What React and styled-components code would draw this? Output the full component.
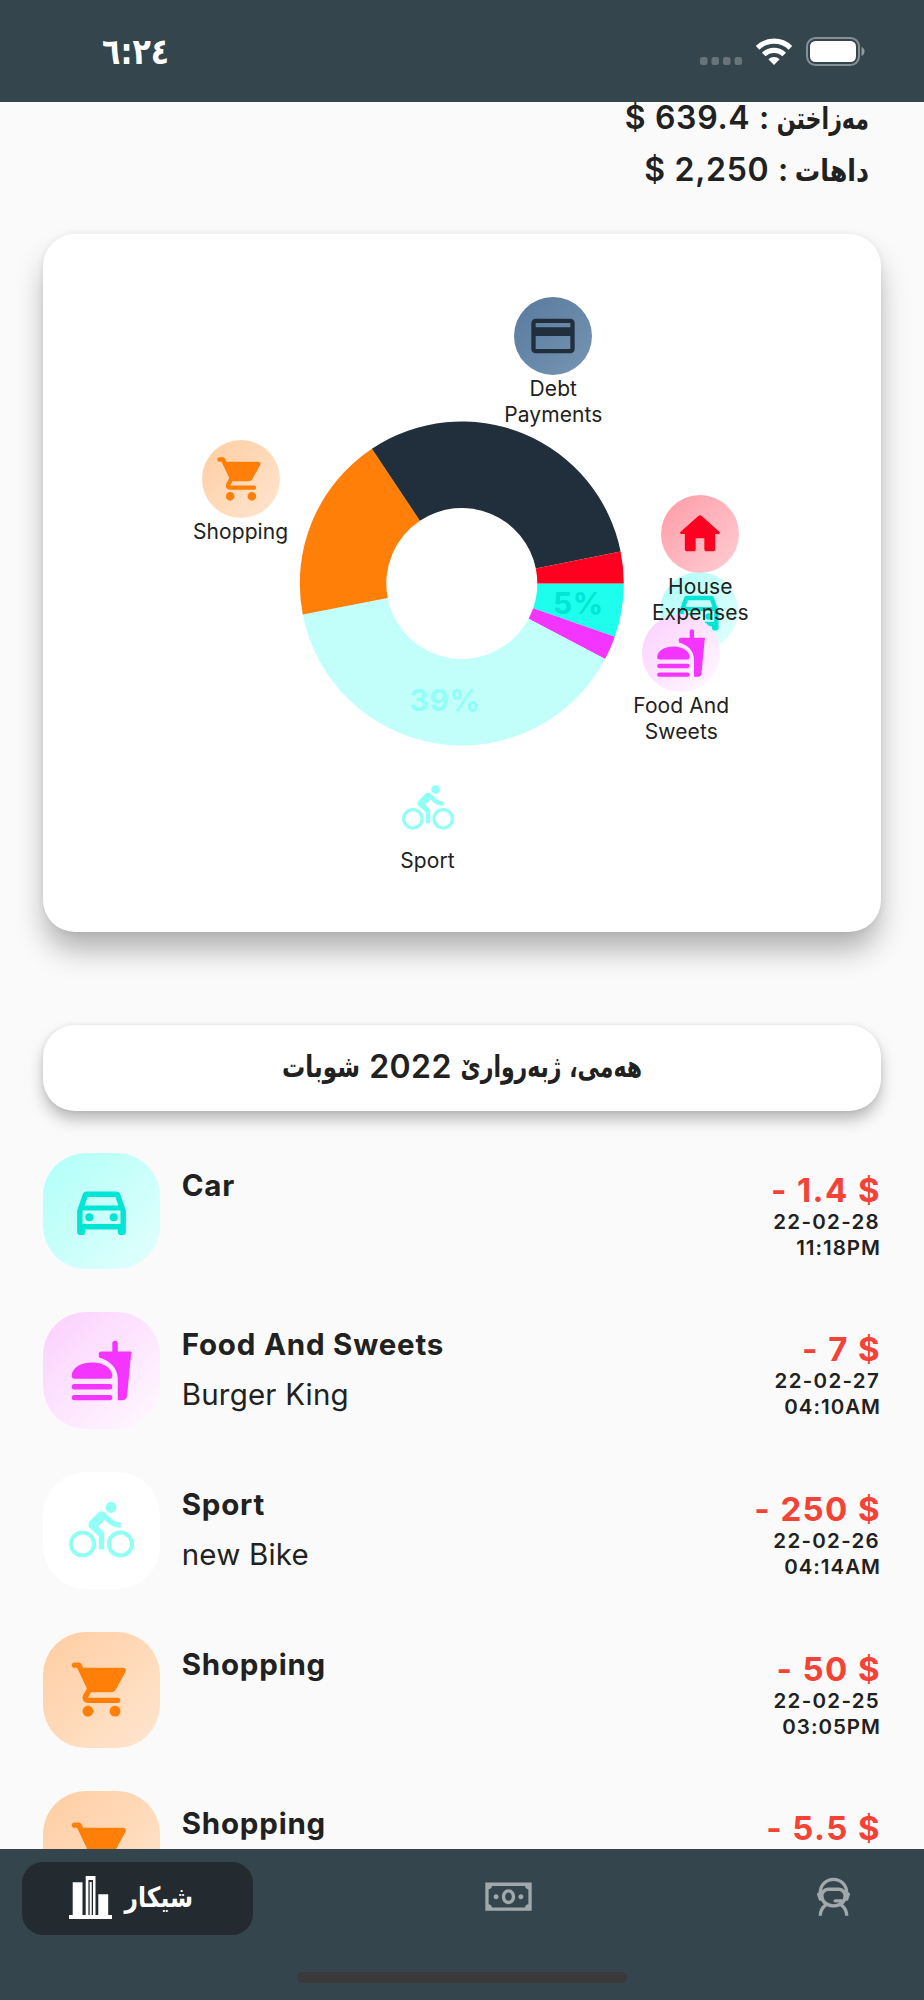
import React from "react";
import styled, { createGlobalStyle } from "styled-components";
import {
  MdCreditCard,
  MdOutlineDirectionsCar,
  MdDirectionsBike,
} from "react-icons/md";
import { LiaMoneyBillSolid, LiaUserAstronautSolid } from "react-icons/lia";

const GlobalStyle = createGlobalStyle`
  * {
    box-sizing: border-box;
  }
  body {
    margin: 0;
    background: #fafafa;
    color: #212121;
    font-family: Inter, "DejaVu Sans", sans-serif;
  }
`;

const Screen = styled.div`
  display: flex;
  flex-direction: column;
  width: 924px;
  height: 2000px;
  overflow: hidden;
`;

const StatusBar = styled.header`
  display: flex;
  flex: none;
  align-items: center;
  justify-content: space-between;
  height: 102px;
  padding: 0 59px 0 102px;
  background: #35454d;
  color: white;
`;

const Clock = styled.span`
  padding-top: 2px;
  direction: ltr;
  unicode-bidi: bidi-override;
  font: bold 36px/40px "DejaVu Sans Condensed", "DejaVu Sans", sans-serif;
  transform: scaleX(0.93);
  transform-origin: left;
`;

const StatusIcons = styled.svg`
  width: 165px;
  height: 30px;
`;

const Content = styled.main`
  flex: 1;
  min-height: 0;
  overflow: hidden;
  padding: 0 43px;
`;

const Totals = styled.section`
  padding: 0 12px 0 0;
  height: 131.5px;
`;

const Total = styled.p`
  display: flex;
  align-items: baseline;
  gap: 8px;
  margin: 0;
  height: 52px;
  font-size: 32px;
  font-weight: 600;
  line-height: 32px;
  letter-spacing: 0.7px;
`;

/* the Arabic face runs wide beside Inter, so each word is narrowed a little */
const Kurdish = styled.span`
  display: inline-block;
  width: ${(props) => props.$width}px;
  font-family: "DejaVu Sans Condensed", "DejaVu Sans", sans-serif;
  font-weight: bold;
  font-size: ${(props) => props.$size || 30}px;
  letter-spacing: 0;
  white-space: nowrap;
  direction: rtl;
  transform: scaleX(${(props) => props.$squeeze});
  transform-origin: right;
`;

const Card = styled.section`
  width: 838px;
  border-radius: 32px;
  background: white;
`;

const ChartCard = styled(Card)`
  position: relative;
  height: 698.5px;
  box-shadow: 0 20px 30px -3px rgba(0, 0, 0, 0.31), 0 0 6px rgba(0, 0, 0, 0.07);
`;

const Donut = styled.svg`
  display: block;
  width: 838px;
  height: 698px;
`;

const Percent = styled.text`
  font-size: 30px;
  font-weight: 700;
  letter-spacing: 0.6px;
  text-anchor: middle;
`;

/* legend bubbles sit freely around the ring */
const Bubble = styled.div`
  position: absolute;
  left: ${(props) => props.$x - 60}px;
  top: ${(props) => props.$y - 39}px;
  display: flex;
  flex-direction: column;
  align-items: center;
  width: 120px;
`;

const BubbleIcon = styled.div`
  display: flex;
  align-items: center;
  justify-content: center;
  width: 78px;
  height: 78px;
  border-radius: 50%;
  background: ${(props) => props.$fill};
  color: ${(props) => props.$color};
  font-size: 52px;
`;

const BubbleName = styled.span`
  margin-top: 1px;
  font-size: 21px;
  line-height: 26px;
  letter-spacing: 0.1px;
  text-align: center;
`;

const FilterCard = styled(Card)`
  display: flex;
  align-items: center;
  justify-content: center;
  gap: 9px;
  height: 86.5px;
  margin-top: 92.5px;
  padding-bottom: 3px;
  font-size: 32px;
  font-weight: 600;
  letter-spacing: 0.4px;
  box-shadow: 0 9px 16px -1px rgba(0, 0, 0, 0.28), 0 0 5px rgba(0, 0, 0, 0.07);
`;

const List = styled.ul`
  display: flex;
  flex-direction: column;
  gap: 43px;
  margin: 0;
  padding: 41.5px 0 0;
  list-style: none;
`;

const Row = styled.li`
  display: flex;
  height: 116.7px;
`;

const Tile = styled.div`
  display: flex;
  flex: none;
  align-items: center;
  justify-content: center;
  width: 116.7px;
  border-radius: 43px;
  background: ${(props) => props.$fill};
  color: ${(props) => props.$color};
  font-size: 65px;
`;

const Texts = styled.div`
  flex: 1;
  padding: 13px 0 0 22px;
`;

const Title = styled.h2`
  margin: 0;
  font-size: 29.5px;
  font-weight: 650;
  line-height: 38px;
  letter-spacing: 0.8px;
`;

const Note = styled.p`
  margin: 12px 0 0;
  font-size: 29.5px;
  line-height: 38px;
  letter-spacing: 0.2px;
`;

const Figures = styled.div`
  display: flex;
  flex-direction: column;
  align-items: flex-end;
  padding-top: 19px;
  font-size: 20.5px;
  font-weight: 600;
  line-height: 26px;
  letter-spacing: 1px;
`;

const Amount = styled.strong`
  color: #f44336;
  font-size: 33px;
  font-weight: 650;
  line-height: 37px;
  letter-spacing: 1.4px;
`;

const EntryDate = styled.span`
  margin-right: 1px;
  letter-spacing: 1.3px;
`;

const NavBar = styled.nav`
  display: flex;
  flex: none;
  flex-direction: column;
  align-items: center;
  height: 151px;
  background: #35454d;
`;

const Tabs = styled.div`
  display: flex;
  align-items: center;
  justify-content: space-between;
  width: 100%;
  height: 73px;
  margin-top: 13px;
  padding: 0 64px 0 22px;
`;

const ActiveTab = styled.button`
  display: flex;
  align-items: center;
  justify-content: center;
  gap: 12px;
  width: 231px;
  height: 73px;
  padding: 0 13px 3px 0;
  border: 0;
  border-radius: 21px;
  background: #232b30;
  color: white;
`;

const Tab = styled.button`
  display: flex;
  padding: 0 0 3px;
  margin-right: ${(props) => props.$push || 0}px;
  border: 0;
  background: none;
  color: #a1a8ab;
  font-size: 53px;
`;

const HomeIndicator = styled.div`
  width: 330px;
  height: 11px;
  margin-top: 37px;
  border-radius: 6px;
  background: #3a3a3a;
`;

const Glyph = ({ children }) => (
  <svg viewBox="0 0 24 24" width="1em" height="1em" fill="currentColor">
    {children}
  </svg>
);

const CartIcon = () => (
  <Glyph>
    <path d="M7 18c-1.1 0-1.99.9-1.99 2S5.9 22 7 22s2-.9 2-2-.9-2-2-2zM1 3c0 .55.45 1 1 1h1l3.6 7.59-1.35 2.44C4.52 15.37 5.48 17 7 17h11c.55 0 1-.45 1-1s-.45-1-1-1H7l1.1-2h7.45c.75 0 1.41-.41 1.75-1.03l3.58-6.49A.996.996 0 0 0 20.01 4H5.21l-.67-1.43a.993.993 0 0 0-.9-.57H2c-.55 0-1 .45-1 1zm16 15c-1.1 0-1.99.9-1.99 2s.89 2 1.99 2 2-.9 2-2-.9-2-2-2z" />
  </Glyph>
);

const HomeIcon = () => (
  <Glyph>
    <path d="M10 19v-5h4v5c0 .55.45 1 1 1h3c.55 0 1-.45 1-1v-7h1.7c.46 0 .68-.57.33-.87L12.67 3.6c-.38-.34-.96-.34-1.34 0l-8.36 7.53c-.34.3-.13.87.33.87H5v7c0 .55.45 1 1 1h3c.55 0 1-.45 1-1z" />
  </Glyph>
);

const FoodIcon = () => (
  <Glyph>
    <path d="M22.9 5H18V2a1 1 0 0 0-2 0v3h-4a1 1 0 0 0-1 1.1l.1 1.1C15 8.3 18 11 18 15.1V23h1.8c.84 0 1.53-.65 1.63-1.47L22.9 6.1A1 1 0 0 0 22.9 5zM15 21H2a1 1 0 0 0 0 2h13a1 1 0 0 0 0-2zM8.5 9C5 9 1 10.6 1 14.1c0 .5.4.9 1 .9h13c.6 0 1-.4 1-.9C16 10.6 12 9 8.5 9zM15 17H2a1 1 0 0 0 0 2h13a1 1 0 0 0 0-2z" />
  </Glyph>
);

const BarsIcon = () => (
  <svg width="43" height="43" viewBox="0 0 43 43" fill="currentColor">
    <path d="M3.7 6.3h9.8v32.8H3.7zM29.3 18.3h9.9v20.8h-9.9zM0 39h43v4H0z" />
    <path d="M16.7 0h9.8v39.1h-9.8zM19.4 4v35.1h1.3V6h2v33.100H24V4z" fillRule="evenodd" />
  </svg>
);

const CATEGORIES = {
  car: {
    name: "Car",
    icon: <MdOutlineDirectionsCar />,
    color: "#00e5d4",
    fill: "linear-gradient(135deg, #b0fff8, #e3fffd)",
    slice: "#1dffec",
  },
  food: {
    name: "Food And Sweets",
    icon: <FoodIcon />,
    color: "#f335ff",
    fill: "linear-gradient(135deg, #fbcfff, #fffaff)",
    slice: "#f335ff",
  },
  sport: {
    name: "Sport",
    icon: <MdDirectionsBike />,
    color: "#90fff5",
    fill: "white",
    slice: "#c3fffa",
  },
  shopping: {
    name: "Shopping",
    icon: <CartIcon />,
    color: "#ff7f08",
    fill: "linear-gradient(135deg, #ffcda1, #ffe6d0)",
    slice: "#ff7f08",
  },
  debt: {
    name: "Debt Payments",
    icon: <MdCreditCard />,
    color: "#212e3b",
    fill: "linear-gradient(135deg, #587a9d, #7795b4)",
    slice: "#212e3b",
  },
  house: {
    name: "House Expenses",
    icon: <HomeIcon />,
    color: "#ff0021",
    fill: "linear-gradient(135deg, #ff9ba7, #ffced4)",
    slice: "#ff0021",
  },
};

// angles in degrees, clockwise from three o'clock
const SLICES = [
  { id: "car", from: 0, to: 19.2, x: 655.7, y: 377.2, percent: "5%" },
  { id: "food", from: 19.2, to: 27.8, x: 638.3, y: 419.5 },
  { id: "sport", from: 27.8, to: 169, x: 384.5, y: 574, percent: "39%" },
  { id: "shopping", from: 169, to: 236.3, x: 197.6, y: 245.6 },
  { id: "debt", from: 236.3, to: 348.6, x: 510.3, y: 102.3 },
  { id: "house", from: 348.6, to: 360, x: 657.3, y: 300 },
];

const CX = 418.8;
const CY = 349.5;

const point = (angle, radius) => {
  const a = (angle * Math.PI) / 180;
  return [CX + radius * Math.cos(a), CY + radius * Math.sin(a)];
};

const ring = (from, to) =>
  `M${point(from, 162)} A162 162 0 0 1 ${point(to, 162)} ` +
  `L${point(to, 75.5)} A75.5 75.5 0 0 0 ${point(from, 75.5)}Z`;

const ENTRIES = [
  { id: "car", amount: "1.4", date: "22-02-28", time: "11:18PM" },
  { id: "food", note: "Burger King", amount: "7", date: "22-02-27", time: "04:10AM" },
  { id: "sport", note: "new Bike", amount: "250", date: "22-02-26", time: "04:14AM" },
  { id: "shopping", amount: "50", date: "22-02-25", time: "03:05PM" },
  { id: "shopping", amount: "5.5" },
];

const SpendingChart = () => (
  <ChartCard>
    <Donut>
      {SLICES.map(({ id, from, to }) => (
        <path key={id} d={ring(from, to)} fill={CATEGORIES[id].slice} />
      ))}
      {SLICES.filter((slice) => slice.percent).map(({ id, from, to, percent }) => {
        const [x, y] = point((from + to) / 2, 118);
        return (
          <Percent key={id} x={x + 0.3} y={y + 10.5} fill={CATEGORIES[id].color}>
            {percent}
          </Percent>
        );
      })}
    </Donut>
    {SLICES.map(({ id, x, y }) => (
      <Bubble key={id} $x={x} $y={y}>
        <BubbleIcon $fill={CATEGORIES[id].fill} $color={CATEGORIES[id].color}>
          {CATEGORIES[id].icon}
        </BubbleIcon>
        <BubbleName>{CATEGORIES[id].name}</BubbleName>
      </Bubble>
    ))}
  </ChartCard>
);

const Entry = ({ id, note, amount, date, time }) => {
  const { name, icon, color, fill } = CATEGORIES[id];
  return (
    <Row>
      <Tile $fill={fill} $color={color}>
        {icon}
      </Tile>
      <Texts>
        <Title>{name}</Title>
        {note && <Note>{note}</Note>}
      </Texts>
      <Figures>
        <Amount>- {amount} $</Amount>
        <EntryDate>{date}</EntryDate>
        <span>{time}</span>
      </Figures>
    </Row>
  );
};

export default function App() {
  return (
    <Screen>
      <GlobalStyle />
      <StatusBar>
        <Clock>٦:٢٤</Clock>
        <StatusIcons viewBox="0 0 165 30" fill="white">
          <g opacity="0.25">
            <rect x="0" y="21" width="7.5" height="8" rx="2.5" />
            <rect x="11.5" y="21" width="7.5" height="8" rx="2.5" />
            <rect x="23" y="21" width="7.5" height="8" rx="2.5" />
            <rect x="34.5" y="21" width="7.5" height="8" rx="2.5" />
          </g>
          <path d="M74 29l-5.6-5.8a8 8 0 0 1 11.2 0z" />
          <g fill="none" stroke="white" strokeWidth="5.2">
            <path d="M63.8 18.5a14.6 14.6 0 0 1 20.4 0" />
            <path d="M57.6 11.8a23.5 23.5 0 0 1 32.8 0" />
          </g>
          <rect x="107" y="2" width="52" height="27" rx="8.5" fill="none" stroke="white" strokeWidth="2" opacity="0.4" />
          <rect x="110" y="5" width="46" height="21" rx="5.5" />
          <path d="M161.5 11c4 1.5 4 7.5 0 9z" opacity="0.45" />
        </StatusIcons>
      </StatusBar>
      <Content>
        <Totals dir="rtl">
          <Total>
            <Kurdish $width={91} $squeeze={0.82}>مەزاختن</Kurdish>
            <span>: 639.4 $</span>
          </Total>
          <Total>
            <Kurdish $width={72} $squeeze={0.94}>داهات</Kurdish>
            <span>: 2,250 $</span>
          </Total>
        </Totals>
        <SpendingChart />
        <FilterCard dir="rtl">
          <Kurdish $width={181} $squeeze={0.815}>هەمی، ژبەروارێ</Kurdish>
          <span>2022</span>
          <Kurdish $width={78} $squeeze={0.857}>شوبات</Kurdish>
        </FilterCard>
        <List>
          {ENTRIES.map((entry, index) => (
            <Entry key={index} {...entry} />
          ))}
        </List>
      </Content>
      <NavBar>
        <Tabs>
          <ActiveTab>
            <BarsIcon />
            <Kurdish $size={28} $width={69} $squeeze={0.93}>شیکار</Kurdish>
          </ActiveTab>
          <Tab $push={43}>
            <LiaMoneyBillSolid />
          </Tab>
          <Tab>
            <LiaUserAstronautSolid />
          </Tab>
        </Tabs>
        <HomeIndicator />
      </NavBar>
    </Screen>
  );
}
